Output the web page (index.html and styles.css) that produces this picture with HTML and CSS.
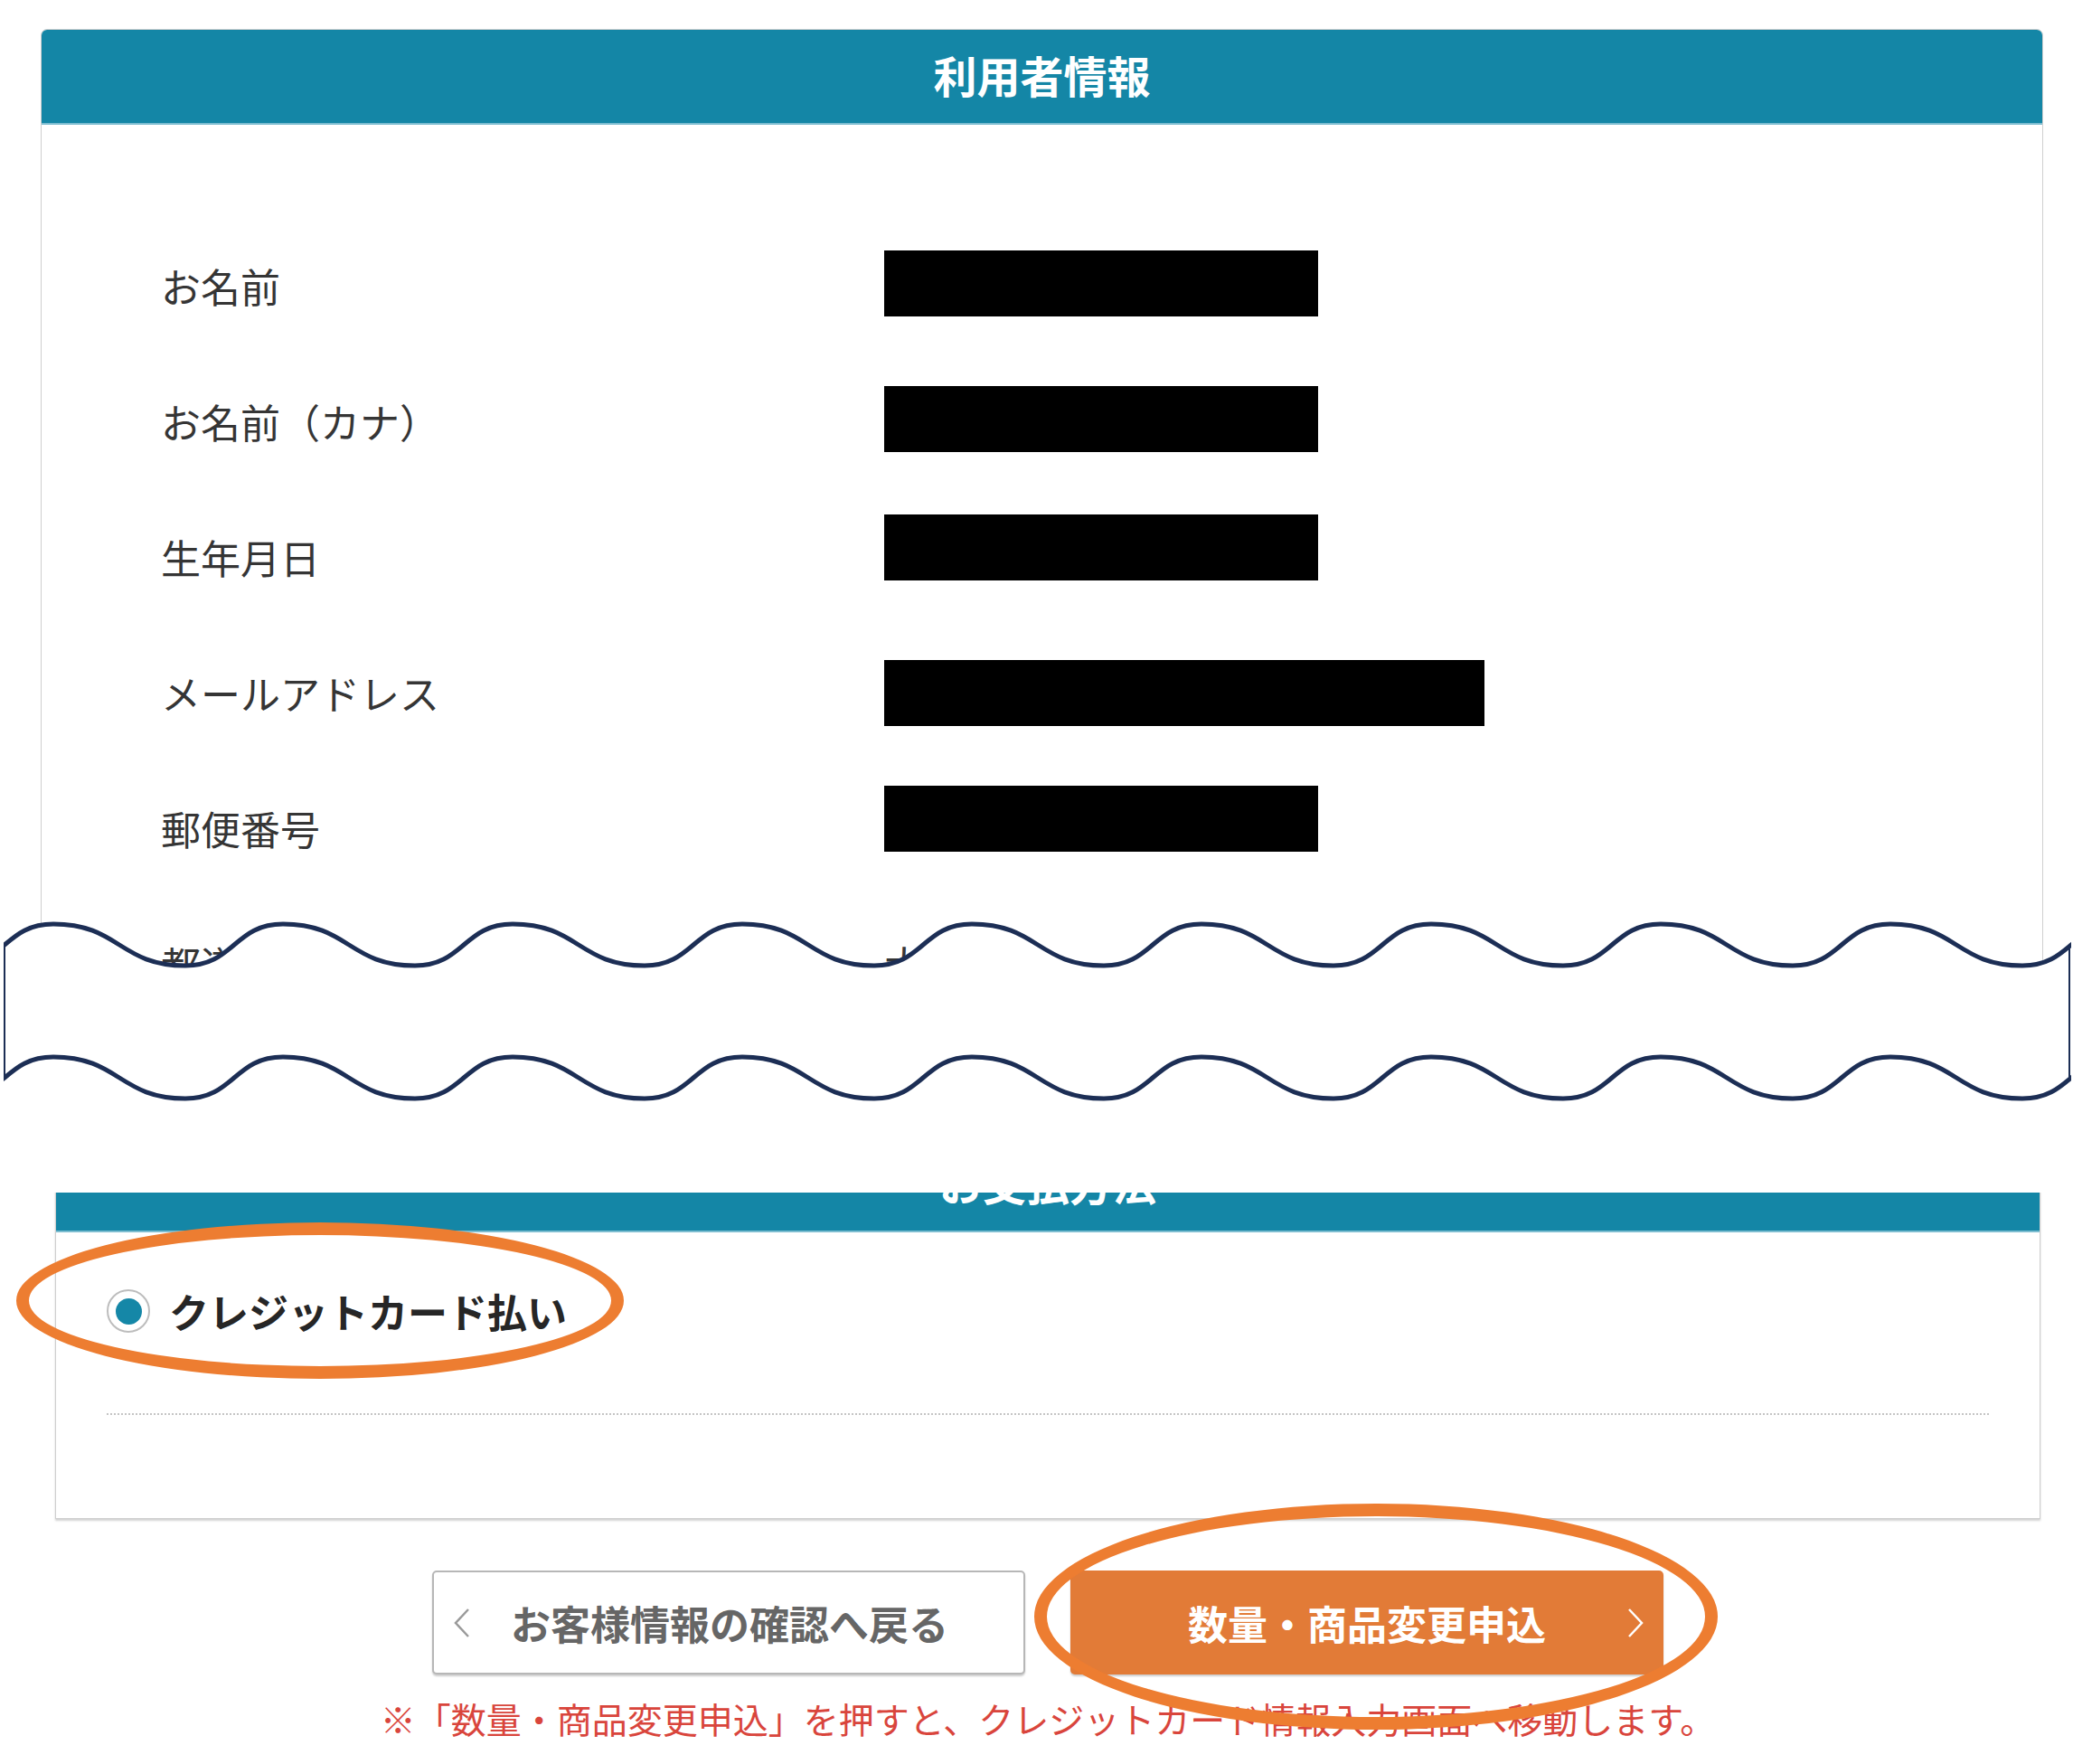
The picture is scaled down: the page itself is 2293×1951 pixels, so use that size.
FILE: index.html
```html
<!DOCTYPE html>
<html lang="ja">
<head>
    <meta charset="UTF-8">
    <meta name="viewport" content="width=device-width, initial-scale=1.0">
    <title>利用者情報</title>
    <link rel="stylesheet" href="styles.css">
</head>
<body>
    <div class="page">

        <div class="panel panel-user">
            <div class="panel-head">利用者情報</div>
            <div class="user-body">
                <div class="info-row">
                    <span class="info-label">お名前</span>
                    <span class="masked"></span>
                </div>
                <div class="info-row">
                    <span class="info-label">お名前（カナ）</span>
                    <span class="masked"></span>
                </div>
                <div class="info-row">
                    <span class="info-label">生年月日</span>
                    <span class="masked masked-up"></span>
                </div>
                <div class="info-row">
                    <span class="info-label">メールアドレス</span>
                    <span class="masked masked-wide"></span>
                </div>
                <div class="info-row">
                    <span class="info-label">郵便番号</span>
                    <span class="masked masked-up"></span>
                </div>
                <div class="info-row">
                    <span class="info-label">都道府県</span>
                    <span class="info-value">大阪府</span>
                </div>
            </div>
        </div>

        <div class="panel panel-pay">
            <div class="panel-head">お支払方法</div>
            <div class="pay-body">
                <label class="pay-option">
                    <span class="radio"></span>
                    <span class="pay-label">クレジットカード払い</span>
                </label>
            </div>
        </div>

        <div class="actions">
            <button class="btn btn-back">
                <svg class="chev" width="20" height="34" viewBox="0 0 20 34"><path d="M17 2 L3 17 L17 32" fill="none" stroke="#9a9a9a" stroke-width="2.5"/></svg>
                <span>お客様情報の確認へ戻る</span>
            </button>
            <button class="btn btn-next">
                <span></span>
                <span>数量・商品変更申込</span>
                <svg class="chev" width="20" height="34" viewBox="0 0 20 34"><path d="M3 2 L17 17 L3 32" fill="none" stroke="#fff" stroke-width="2.5"/></svg>
            </button>
        </div>
        <p class="note">※「数量・商品変更申込」を押すと、クレジットカード情報入力画面へ移動します。</p>

        <!-- page break mark -->
        <svg class="cut" width="2293" height="319" viewBox="0 1000 2293 319">
            <defs>
                <clipPath id="cutclip"><rect x="4" y="1000" width="2287" height="319"/></clipPath>
            </defs>
            <path fill="#fff" d="M-49 1068 c54 0 54 -46 108 -46 c73 0 73 46 146 46 c54 0 54 -46 108 -46 c73 0 73 46 146 46 c54 0 54 -46 108 -46 c73 0 73 46 146 46 c54 0 54 -46 108 -46 c73 0 73 46 146 46 c54 0 54 -46 108 -46 c73 0 73 46 146 46 c54 0 54 -46 108 -46 c73 0 73 46 146 46 c54 0 54 -46 108 -46 c73 0 73 46 146 46 c54 0 54 -46 108 -46 c73 0 73 46 146 46 c54 0 54 -46 108 -46 c73 0 73 46 146 46 c54 0 54 -46 108 -46 L2345 1319 L-49 1319 Z"/>
            <g clip-path="url(#cutclip)" fill="none" stroke="#1c2e55" stroke-width="5">
                <path d="M-49 1068 c54 0 54 -46 108 -46 c73 0 73 46 146 46 c54 0 54 -46 108 -46 c73 0 73 46 146 46 c54 0 54 -46 108 -46 c73 0 73 46 146 46 c54 0 54 -46 108 -46 c73 0 73 46 146 46 c54 0 54 -46 108 -46 c73 0 73 46 146 46 c54 0 54 -46 108 -46 c73 0 73 46 146 46 c54 0 54 -46 108 -46 c73 0 73 46 146 46 c54 0 54 -46 108 -46 c73 0 73 46 146 46 c54 0 54 -46 108 -46 c73 0 73 46 146 46 c54 0 54 -46 108 -46"/>
                <path d="M-49 1215 c54 0 54 -46 108 -46 c73 0 73 46 146 46 c54 0 54 -46 108 -46 c73 0 73 46 146 46 c54 0 54 -46 108 -46 c73 0 73 46 146 46 c54 0 54 -46 108 -46 c73 0 73 46 146 46 c54 0 54 -46 108 -46 c73 0 73 46 146 46 c54 0 54 -46 108 -46 c73 0 73 46 146 46 c54 0 54 -46 108 -46 c73 0 73 46 146 46 c54 0 54 -46 108 -46 c73 0 73 46 146 46 c54 0 54 -46 108 -46 c73 0 73 46 146 46 c54 0 54 -46 108 -46"/>
                <path stroke-width="2" d="M5 1045 L5 1192 M2289 1045 L2289 1192"/>
            </g>
        </svg>

        <!-- highlight marks -->
        <div class="mark mark-pay"></div>
        <div class="mark mark-submit"></div>
    </div>
</body>
</html>
```

FILE: styles.css
```css
body {
    margin: 0;
    background-color: #fff;
    font-family: "Noto Sans CJK JP", "Noto Sans", sans-serif;
    color: #353535;
}

.page {
    position: relative;
    width: 2293px;
    height: 1951px;
    padding-top: 32px;
    box-sizing: border-box;
    overflow: hidden;
}

.panel {
    background-color: #fff;
    border: 1px solid #cfcfcf;
    border-radius: 7px 7px 0 0;
    box-sizing: border-box;
}

.panel-user {
    margin-left: 45px;
    width: 2215px;
}

.panel-pay {
    margin-left: 61px;
    width: 2196px;
    margin-top: 75px;
    border-radius: 0;
    box-shadow: 0 2px 2px rgba(0, 0, 0, 0.18);
}

.panel-head {
    height: 105px;
    display: flex;
    align-items: center;
    justify-content: center;
    padding-bottom: 5px;
    background-color: #1486a6;
    border-bottom: 2px solid #7dbdd0;
    border-radius: 6px 6px 0 0;
    box-sizing: border-box;
    color: #fff;
    font-size: 48px;
    font-weight: 700;
}

.panel-pay .panel-head {
    border-radius: 0;
}

/* user info rows */
.user-body {
    padding: 103px 0 40px 132px;
}

.info-row {
    display: grid;
    grid-template-columns: 800px auto;
    align-items: center;
    height: 150px;
}

.info-label,
.info-value {
    font-size: 44px;
    line-height: 1;
}

.masked {
    display: block;
    width: 480px;
    height: 73px;
    margin-bottom: 6px;
    background-color: #000;
}

.masked-up {
    margin-bottom: 22px;
}

.masked-wide {
    width: 664px;
    margin-bottom: 0;
}

/* payment */
.pay-body {
    padding: 0 56px 114px;
}

.pay-option {
    display: flex;
    align-items: center;
    gap: 21px;
    padding: 63px 0 89px;
    border-bottom: 2px dotted #c4c4c4;
}

.radio {
    width: 48px;
    height: 48px;
    display: flex;
    align-items: center;
    justify-content: center;
    border: 2px solid #bdbdbd;
    border-radius: 50%;
    box-sizing: border-box;
    background-color: #fff;
}

.radio::after {
    content: "";
    width: 29px;
    height: 29px;
    border-radius: 50%;
    background-color: #1587a7;
}

.pay-label {
    font-size: 44px;
    font-weight: 700;
    line-height: 1;
    color: #262626;
}

/* buttons */
.actions {
    margin: 57px 0 0 61px;
    width: 2196px;
    display: flex;
    justify-content: center;
    gap: 50px;
}

.btn {
    width: 656px;
    height: 115px;
    border-radius: 5px;
    box-sizing: border-box;
    font-family: inherit;
    font-size: 44px;
    font-weight: 700;
    cursor: pointer;
    box-shadow: 0 2px 2px rgba(0, 0, 0, 0.2);
}

.btn-back {
    display: flex;
    align-items: center;
    gap: 44px;
    padding: 0 0 0 21px;
    background-color: #fff;
    border: 2px solid #b7b7b7;
    color: #666;
}

.btn-next {
    display: grid;
    grid-template-columns: 1fr auto 1fr;
    align-items: center;
    padding: 0 21px;
    background-color: #e27b37;
    border: none;
    color: #fff;
}

.btn-next .chev {
    justify-self: end;
}

.note {
    margin: 25px 0 0 61px;
    width: 2196px;
    text-align: center;
    font-size: 39px;
    line-height: 46px;
    color: #d9453c;
}

/* overlays */
.cut {
    position: absolute;
    left: 0;
    top: 1000px;
}

.mark {
    position: absolute;
    border: 14px solid #ed7d31;
    border-radius: 50%;
    box-sizing: border-box;
}

.mark-pay {
    left: 18px;
    top: 1352px;
    width: 672px;
    height: 173px;
}

.mark-submit {
    left: 1144px;
    top: 1663px;
    width: 756px;
    height: 250px;
}
```
